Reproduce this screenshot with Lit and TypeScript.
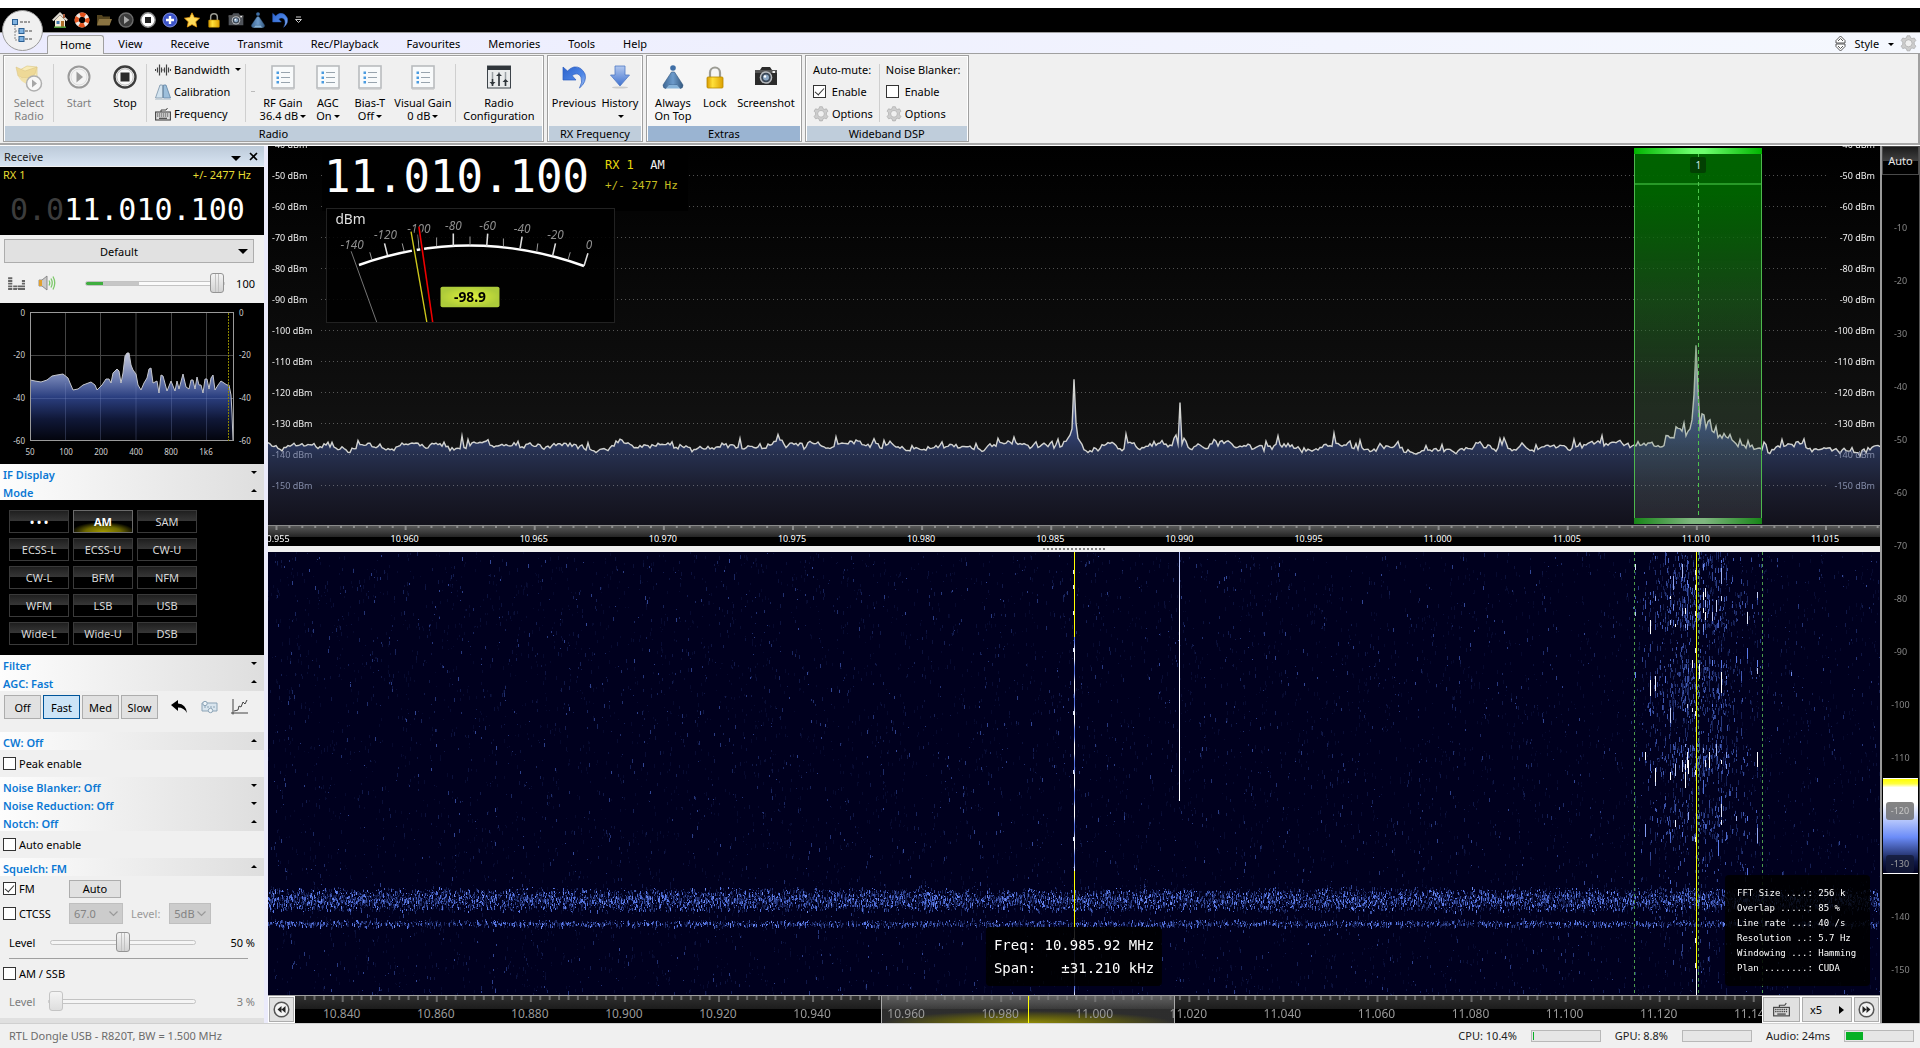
import { LitElement, html, css, svg, nothing } from "lit";
import { customElement, query } from "lit/decorators.js";

/* ---------- receiver data (kHz / dBm) ---------- */
const CENTRE = 10985.92;
const HALF_SPAN = 31.21;
const VFO = 11010.1;
const HALF_BW = 2.477;
const START = CENTRE - HALF_SPAN;
const SPAN = HALF_SPAN * 2;
const pct = (f: number) => ((f - START) / SPAN) * 100;
const DB_TOP = -40.7;
const DB_RANGE = 122.3;
const dbPct = (db: number) => ((DB_TOP - db) / DB_RANGE) * 100;

const BAND_START = 10830.07;
const BAND_SPAN = 311.9;
const bandPct = (f: number) => ((f - BAND_START) / BAND_SPAN) * 100;

const fmt = (k: number) => (k / 1000).toFixed(3);

function rng(seed: number) {
  let a = seed;
  return () => {
    a = (a + 0x6d2b79f5) | 0;
    let t = Math.imul(a ^ (a >>> 15), 1 | a);
    t = (t + Math.imul(t ^ (t >>> 7), 61 | t)) ^ t;
    return ((t ^ (t >>> 14)) >>> 0) / 4294967296;
  };
}

/* ---------- icons ---------- */
const play = (c: string, s: number) => svg`<svg width=${s} height=${s} viewBox="0 0 24 24"><circle cx="12" cy="12" r="10.5" fill="#f4f4f4" stroke=${c} stroke-width="2"/><circle cx="12" cy="12" r="8" fill="none" stroke="#ddd"/><path d="M9.5 6.5 L16 12 L9.5 17.5Z" fill=${c}/></svg>`;
const stop = (c: string, s: number) => svg`<svg width=${s} height=${s} viewBox="0 0 24 24"><circle cx="12" cy="12" r="10.5" fill="#fafafa" stroke=${c} stroke-width="2.4"/><circle cx="12" cy="12" r="8.2" fill="none" stroke="#bbb"/><rect x="7.5" y="7.5" width="9" height="9" fill="#2c2c2c"/></svg>`;
const listIcon = svg`<svg width="24" height="25" viewBox="0 0 24 25"><rect x="1" y="1" width="22" height="22" fill="#f8fafb" stroke="#b9bcbf" stroke-width="1.6"/><path d="M1 24.3H23" stroke="#d0d0d0"/><g fill="#4a9be0"><rect x="5.500" y="6.500" width="2.500" height="2.500"/><rect x="5.500" y="11.500" width="2.500" height="2.500"/><rect x="5.500" y="16" width="2.500" height="2.500"/></g><path d="M10 7.5H19M10 12.5H19M10 17.5H19" stroke="#98a4ae"/></svg>`;
const lock = (s: number) => svg`<svg width=${s} height=${s} viewBox="0 0 24 24"><path d="M7 13V7.5a5 5 0 0 1 10 0V13" fill="none" stroke="#9c9c94" stroke-width="2.2"/><rect x="4" y="12" width="16" height="11" rx="1" fill="url(#gold)" stroke="#b98a00" stroke-width=".8"/><defs><linearGradient id="gold"><stop offset="0" stop-color="#d99a00"/><stop offset=".35" stop-color="#ffe03a"/><stop offset="1" stop-color="#dda000"/></linearGradient></defs></svg>`;
const cone = (s: number) => svg`<svg width=${s} height=${s} viewBox="0 0 24 24"><circle cx="12" cy="3" r="2.8" fill="#3f6fa6"/><path d="M10.5 7h3L22 20q0 3.5-3 3.500L16 20H8l-3 3.500q-3 0-3-3.500Z" fill="url(#cn)" stroke="#34587f" stroke-width=".6"/><path d="M5 23.500L8 20h8l3 3.500Z" fill="#86b3da"/><defs><linearGradient id="cn"><stop offset="0" stop-color="#3d6794"/><stop offset=".5" stop-color="#6d9bcb"/><stop offset="1" stop-color="#34587f"/></linearGradient></defs></svg>`;
const undo = (s: number) => svg`<svg width=${s} height=${s} viewBox="0 0 24 24"><path d="M1 2V15H14L10 10.500Q16 6.500 19 12Q21 17 17.500 23Q25 17 23 9Q19 1 12 2Q8.500 2.800 5.500 6Z" fill="url(#un)" stroke="#2a5cc0" stroke-width=".7"/><defs><linearGradient id="un" x2="1" y2="1"><stop offset="0" stop-color="#2d63cc"/><stop offset=".6" stop-color="#4d86e6"/><stop offset="1" stop-color="#a9c6f6"/></linearGradient></defs></svg>`;
const camera = (s: number, c = "#2b2b2b") => svg`<svg width=${s} height=${s} viewBox="0 0 24 24"><path d="M1 5H6L8 2H16L18 5H23V20H1Z" fill=${c}/><rect x="1" y="5" width="22" height="3" fill="#555"/><circle cx="12" cy="12.500" r="6.300" fill="#b9bcc0"/><circle cx="12" cy="12.500" r="4.800" fill="#3a4654"/><circle cx="12" cy="12.500" r="3" fill="#8ba6c2"/><circle cx="11" cy="11.500" r="1.200" fill="#fff"/><rect x="18.500" y="6" width="2.500" height="2" fill="#eee"/></svg>`;
const gear = (s: number) => svg`<svg width=${s} height=${s} viewBox="0 0 24 24"><g fill="#cdcdcd" stroke="#9c9c9c" stroke-width=".8"><path d="M10 1h4l1 3 2 1 3.200-.8 2.200 3.500-2.200 2.500v3l2.200 2.500-2.200 3.500-3.200-.8-2 1-1 3h-4l-1-3-2-1-3.200.8L1.600 15.700l2.200-2.500v-3L1.600 7.700 3.800 4.200 7 5l2-1Z"/><circle cx="12" cy="11.700" r="5" fill="#f0f0f0"/></g></svg>`;
const bandwidthIcon = svg`<svg width="16" height="14" viewBox="0 0 16 14"><path d="M.5 6v2M2.500 4.500v5M4.500 1.500v11M6.500 4.500v5M8 6.500v1M9.500 4.500v5M11.500 1.500v11M13.500 4.500v5M15.500 6v2" stroke="#444" stroke-width="1.200"/></svg>`;
const calibIcon = svg`<svg width="16" height="16" viewBox="0 0 16 16"><path d="M5 1H7.500V14H.5Z" fill="#d2e3ef" stroke="#7892a8" stroke-width=".8"/><path d="M8.500 1H11L15.500 14H8.500Z" fill="#9dbfdb" stroke="#5f84a4" stroke-width=".8"/><path d="M0 15.500H16" stroke="#c9d3da"/></svg>`;
const keyboard = (w: number, c = "#444") => svg`<svg width=${w} height=${w - 2} viewBox="0 0 16 14"><path d="M6 5V3H11L12.500 1" fill="none" stroke=${c}/><rect x=".6" y="5" width="14.800" height="8" fill="#ddd" stroke=${c} stroke-width="1.100"/><path d="M2 7H14M2 9H14" stroke=${c} stroke-width="1.200" stroke-dasharray="1.300 .7"/><path d="M4 11.300H12" stroke=${c} stroke-width="1.200"/></svg>`;
const mixer = svg`<svg width="24" height="24" viewBox="0 0 24 24"><rect x=".5" y="1" width="23" height="22" fill="#e9ebec" stroke="#3d444a"/><rect x=".5" y="1" width="23" height="4" fill="#30363b"/><path d="M5.500 7V21M12 7V21M18.500 7V21" stroke="#9aa0a5" stroke-width="1.500"/><path d="M5.500 14V21M12 10V21M18.500 15V21" stroke="#30363b" stroke-width="1.500"/><path d="M2.500 17L5.500 20L8.500 17ZM9 11L12 8L15 11ZM15.500 17L18.500 14L21.500 17Z" fill="#30363b"/></svg>`;
const folderPlay = svg`<svg width="28" height="27" viewBox="0 0 28 27" opacity=".75"><path d="M3 6L12 1L22 2V13L9 16Z" fill="#fbeaa4" stroke="#d9bf68" stroke-width=".7"/><path d="M1 2L3 11Q12 16 20 9L22 2L10 6Z" fill="#eed27a" stroke="#d0b05a" stroke-width=".5"/><path d="M3 11Q9 15 14 13L12 19Q5 16 3 11Z" fill="#f2dc92"/><circle cx="19" cy="18.500" r="7.500" fill="#fafafa" stroke="#9a9a9a" stroke-width="1.500"/><path d="M17 14.500L22 18.500L17 22.500Z" fill="#8e8e8e"/></svg>`;
const downArrow = svg`<svg width="24" height="24" viewBox="0 0 24 24"><path d="M7 1H17V10H21.500L12 21L2.500 10H7Z" fill="url(#da)" stroke="#4f79c4" stroke-width=".8"/><ellipse cx="12" cy="22.500" rx="8" ry="1" fill="#ccc"/><defs><linearGradient id="da" x2="0" y2="1"><stop offset="0" stop-color="#b3c8ee"/><stop offset="1" stop-color="#3f72d0"/></linearGradient></defs></svg>`;

const q = (label: string, icon: unknown) => html`<button class="qa" aria-label=${label}>${icon}</button>`;
const quick = [
  q("Home", svg`<svg width="16" height="16" viewBox="0 0 16 16"><path d="M3 8V15H13V8L8 3Z" fill="#f3ead6"/><path d="M.8 8.500L8 1.500L15.200 8.500" fill="none" stroke="#ddd9d0" stroke-width="2"/><rect x="11" y="2" width="2" height="4" fill="#a65a3a"/><rect x="4.500" y="9" width="3" height="3" fill="#3e78b0"/><rect x="9" y="9" width="3" height="6" fill="#b0702a"/><path d="M2 15.200H14" stroke="#4e9a3a" stroke-width="1.500"/></svg>`),
  q("Support", svg`<svg width="16" height="16" viewBox="0 0 16 16"><circle cx="8" cy="8" r="5.300" fill="none" stroke="#f2e9e2" stroke-width="4.200"/><circle cx="8" cy="8" r="5.300" fill="none" stroke="#e2521c" stroke-width="4.200" stroke-dasharray="5.300 3.025" stroke-dashoffset="2.650"/></svg>`),
  q("Open", svg`<svg width="16" height="16" viewBox="0 0 16 16"><path d="M1 3H6L7 4.500H14V13H1Z" fill="#54441f"/><path d="M3 7H16L13.500 13.500H1Z" fill="#8a7342"/></svg>`),
  q("Start", svg`<svg width="16" height="16" viewBox="0 0 16 16"><circle cx="8" cy="8" r="7" fill="#3c3c3c" stroke="#6c6c6c" stroke-width="1.400"/><path d="M6 4L11.500 8L6 12Z" fill="#aaa"/></svg>`),
  q("Stop", svg`<svg width="16" height="16" viewBox="0 0 16 16"><circle cx="8" cy="8" r="7.200" fill="#fff" stroke="#8a8a8a" stroke-width="1.400"/><rect x="5" y="5" width="6" height="6" fill="#222"/></svg>`),
  q("Add", svg`<svg width="16" height="16" viewBox="0 0 16 16"><circle cx="8" cy="8" r="7" fill="#3b53c9" stroke="#8292e0"/><path d="M8 4V12M4 8H12" stroke="#fff" stroke-width="2.400"/></svg>`),
  q("Favourite", svg`<svg width="16" height="16" viewBox="0 0 16 16"><path d="M8 .8L10.300 5.500L15.500 6.200L11.700 9.800L12.700 15L8 12.500L3.300 15L4.300 9.800L.5 6.200L5.700 5.500Z" fill="#ffdc5a" stroke="#e89a10" stroke-width=".8"/></svg>`),
  q("Lock", lock(16)),
  q("Screenshot", camera(16, "#50545a")),
  q("On top", cone(16)),
  q("Previous", undo(16)),
];

const big = (icon: unknown, a: string, b: unknown, w: string, off = false) =>
  html`<button class="big ${w}" ?disabled=${off}><span class="ico">${icon}</span><span>${a}</span><span>${b}</span></button>`;
const caret = html`<i class="caret"></i>`;

const section = (t: string, open: boolean) =>
  html`<button class="section" aria-expanded=${open}>${t}<i class="tri ${open ? "up" : ""}"></i></button>`;

const MODES = ["• • •", "AM", "SAM", "ECSS-L", "ECSS-U", "CW-U", "CW-L", "BFM", "NFM", "WFM", "LSB", "USB", "Wide-L", "Wide-U", "DSB"];

/* audio spectrum trace, in panel units */
const AUDIO: number[][] = [
  [30.5, 77], [35, 78], [41, 79], [47, 77], [52, 73], [57, 72], [63, 71], [68, 75], [70, 80], [73, 87], [78, 86], [83, 82], [91, 79], [95, 82], [97, 87], [102, 82], [106, 76], [109, 76], [111, 80], [113, 70], [117, 66], [119, 68], [121, 80], [123, 70], [125, 53], [127, 50], [129, 50], [131, 62], [133, 67], [136, 71], [138, 82], [141, 87], [144, 80], [147, 75], [149, 66], [151, 65], [153, 80], [157, 78], [159, 90], [161, 72], [163, 73], [167, 88], [171, 78], [175, 88], [177, 78], [179, 86], [183, 71], [186, 84], [189, 86], [191, 77], [193, 77], [195, 86], [197, 74], [199, 82], [201, 82], [203, 90], [205, 76], [207, 76], [209, 86], [211, 75], [213, 72], [215, 87], [218, 82], [221, 78], [224, 80], [227, 82], [229, 82], [231, 92], [232, 110], [233, 138],
];
const audioLine = AUDIO.map((p) => p.join(",")).join(" ");

const INFO = ["FFT Size ....: 256 k", "Overlap .....: 85 %", "Line rate ...: 40 /s", "Resolution ..: 5.7 Hz", "Windowing ...: Hamming", "Plan ........: CUDA"];

const range = (a: number, b: number, s: number) => {
  const r: number[] = [];
  for (let i = 0; a + i * s <= b; i++) r.push(a + i * s);
  return r;
};

/* ---------- spectrum plot ---------- */
@customElement("spectrum-plot")
export class SpectrumPlot extends LitElement {
  static styles = css`
    :host { display: block; overflow: hidden; }
    canvas { display: block; }
  `;
  @query("canvas") canvas!: HTMLCanvasElement;
  firstUpdated() {
    new ResizeObserver(() => this.draw()).observe(this);
    this.draw();
  }
  draw() {
    const w = this.clientWidth, h = this.clientHeight;
    if (!w || !h) return;
    const c = this.canvas;
    c.width = w; c.height = h;
    const g = c.getContext("2d")!;
    const bg = g.createLinearGradient(0, 0, 0, h);
    bg.addColorStop(0, "#000"); bg.addColorStop(1, "#171717");
    g.fillStyle = bg; g.fillRect(0, 0, w, h);
    const yOf = (db: number) => (dbPct(db) / 100) * h;

    const rnd = rng(77);
    const noise: number[] = [];
    let wander = 0;
    let spike = 0;
    for (let x = 0; x <= w; x += 2) {
      wander = wander * 0.84 + (rnd() - 0.5) * 1.5;
      spike = rnd() < 0.12 ? 0.6 + rnd() * rnd() * 3.6 : spike * 0.1;
      let db = -137.7 + wander + spike + (rnd() - 0.5) * 1.1;
      const f = START + (x / w) * SPAN;
      const side = Math.abs(f - 11010.1);
      if (side < 1.3) db = Math.max(db, -137 + (1.3 - side) * 2.6 + rnd() * 6.4 * (1.2 - side * 0.5));
      noise.push(db);
    }
    const at = (f: number) => ((f - START) / SPAN) * w;
    for (const [f, top, wide] of [[10985.92, -116, 4], [10990, -123.5, 3], [11010, -105, 3]]) {
      const cx = Math.round(at(f) / 2);
      noise[cx] = top;
      noise[cx - 1] = Math.max(noise[cx - 1], top - 16);
      noise[cx + 1] = Math.max(noise[cx + 1], top - 14);
      for (let i = 2; i <= wide; i++) {
        noise[cx - i] = Math.max(noise[cx - i], -132 - i);
        noise[cx + i] = Math.max(noise[cx + i], -133 - i);
      }
    }
    g.beginPath();
    g.moveTo(0, h);
    noise.forEach((d, i) => g.lineTo(i * 2, yOf(d)));
    g.lineTo(w, h);
    g.closePath();
    const fill = g.createLinearGradient(0, yOf(-105), 0, h);
    fill.addColorStop(0, "#c8cbe0"); fill.addColorStop(0.3, "#66749f"); fill.addColorStop(0.45, "#35457a");
    fill.addColorStop(0.6, "#26304f"); fill.addColorStop(0.8, "#1a1c2c"); fill.addColorStop(1, "#12111b");
    g.fillStyle = fill; g.fill();
    g.strokeStyle = "#d2d3d0"; g.lineWidth = 1.4;
    g.beginPath();
    noise.forEach((d, i) => (i ? g.lineTo(i * 2, yOf(d)) : g.moveTo(0, yOf(d))));
    g.stroke();
    g.fillStyle = "rgba(190,190,190,.42)";
    for (let db = -50; db >= -150; db -= 10) {
      const y = Math.round(yOf(db));
      for (let x = 53; x < w - 52; x += 4) g.fillRect(x, y, 1, 1);
    }
  }
  render() { return html`<canvas></canvas>`; }
}

/* ---------- waterfall plot ---------- */
@customElement("waterfall-plot")
export class WaterfallPlot extends LitElement {
  static styles = css`
    :host { display: block; overflow: hidden; background: #00001e; }
    canvas { display: block; }
  `;
  @query("canvas") canvas!: HTMLCanvasElement;
  firstUpdated() {
    new ResizeObserver(() => this.draw()).observe(this);
    this.draw();
  }
  colour(v: number): [number, number, number] {
    const stops: [number, number, number, number][] = [[0, 0, 0, 30], [0.25, 24, 36, 92], [0.6, 90, 122, 235], [0.85, 255, 255, 255], [0.97, 255, 255, 255], [1, 255, 255, 0]];
    v = Math.max(0, Math.min(1, v));
    for (let i = 1; i < stops.length; i++) {
      const a = stops[i - 1], b = stops[i];
      if (v <= b[0]) {
        const t = (v - a[0]) / (b[0] - a[0]);
        return [a[1] + (b[1] - a[1]) * t, a[2] + (b[2] - a[2]) * t, a[3] + (b[3] - a[3]) * t];
      }
    }
    return [255, 255, 0];
  }
  draw() {
    const w = this.clientWidth, h = this.clientHeight;
    if (!w || !h) return;
    const c = this.canvas;
    c.width = w; c.height = h;
    const g = c.getContext("2d")!;
    const v = new Float32Array(w * h);
    const rnd = rng(4242);
    const put = (x: number, y: number, len: number, a: number) => {
      x = Math.round(x); y = Math.round(y);
      if (x < 0 || x >= w) return;
      for (let i = 0; i < len; i++) {
        const yy = y + i;
        if (yy < 0 || yy >= h) continue;
        const k = yy * w + x;
        if (a > v[k]) v[k] = a;
      }
    };
    const n = (w * h) / 75;
    for (let i = 0; i < n; i++) {
      const r = rnd();
      put(rnd() * w, rnd() * h, 1 + Math.floor(rnd() * 4), 0.06 + r * r * r * r * 0.34);
    }
    /* broadband bursts */
    const bands: [number, number, number][] = [[0.755, 0.812, 0.46], [0.829, 0.846, 0.42]];
    for (const [a, b, dens] of bands) {
      const y0 = a * h, y1 = b * h;
      const count = w * (y1 - y0) * dens * 0.62;
      for (let i = 0; i < count; i++) {
        const t = (rnd() + rnd()) / 2;
        const r = rnd();
        put(rnd() * w, y0 + t * (y1 - y0), 1 + Math.floor(rnd() * 3), 0.14 + r * r * 0.5);
      }
    }
    /* modulation sidebands */
    const at = (f: number) => ((f - START) / SPAN) * w;
    const carrier = at(11010);
    const env = (t: number) => {
      if (t < 0.02) return 0.55;
      if (t < 0.09) return 0.75;
      if (t < 0.17) return 0.9;
      if (t < 0.24) return 0.28;
      if (t < 0.36) return 0.85;
      if (t < 0.43) return 0.35;
      if (t < 0.5) return 0.9;
      if (t < 0.56) return 0.3;
      if (t < 0.65) return 0.6;
      if (t < 0.72) return 0.16;
      return 0.08;
    };
    const cols: [number, number][] = [[-61, .3], [-51, .25], [-46, .5], [-41, .4], [-31, .3], [-26, .6], [-23, .6], [-21, .4], [-14, .55], [-11, .6], [-9, .85], [-8, .7], [-4, .7], [3, .6], [7, .9], [9, .8], [13, .55], [16, .5], [20, .6], [22, .4], [25, .7], [30, .4], [40, .3], [45, .45], [51, .25], [61, .35], [95, .04]];
    for (const [dx, s] of cols) {
      for (let y = 0; y < h; y += 4) {
        const e = env(y / h);
        const m = rnd();
        if (m < e * s * 0.6) {
          const boost = rnd();
          put(carrier + dx, y, 3 + Math.floor(rnd() * (boost > 0.85 ? 14 : 6)), Math.min(0.93, (0.26 + boost * boost * boost * 0.75) * (0.55 + e * 0.5)));
        }
      }
    }
    for (let i = 0; i < 3000; i++) {
      const y = rnd() * h * 0.97;
      if (rnd() > env(y / h)) continue;
      const d = (rnd() + rnd() + rnd() - 1.5) * 50;
      put(carrier + d, y, 2 + Math.floor(rnd() * 4), 0.12 + rnd() * 0.35);
    }
    /* steady carriers */
    const a = Math.round(at(10985.92)), b = Math.round(at(10990));
    for (let y = 0; y < h; y++) {
      if (y < h * 0.56) put(b, y, 1, 0.72 + Math.min(0.18, (y / h) * 0.9));
      put(a, y, 1, 0.74 + 0.18 * Math.sin(y / 5));
      if (y < h * 0.19 || (y > h * 0.72 && y < h * 0.85)) put(a, y, 1, 1);
      put(Math.round(carrier), y, 1, y < h * 0.94 ? 1 : 0.9);
      if (rnd() < 0.02) { put(a - 1, y, 4, 0.8); put(carrier - 1, y, 5, 0.8); }
    }
    const img = g.createImageData(w, h);
    for (let i = 0; i < v.length; i++) {
      const [r, gr, bl] = this.colour(v[i]);
      img.data[i * 4] = r; img.data[i * 4 + 1] = gr; img.data[i * 4 + 2] = bl; img.data[i * 4 + 3] = 255;
    }
    g.putImageData(img, 0, 0);
  }
  render() { return html`<canvas></canvas>`; }
}

/* ---------- application ---------- */
@customElement("app-root")
export class AppRoot extends LitElement {
  static styles = css`
    :host { display: flex; flex-direction: column; height: 100vh; overflow: hidden; background: #f0f0f0; font: 11px/13px "Noto Sans", "Open Sans", sans-serif; color: #000; }
    * { box-sizing: border-box; }
    button, select, input { font: inherit; color: inherit; margin: 0; }
    button { padding: 0; border: 0; background: none; }
    svg { display: block; flex: none; }
    .caret { display: inline-block; border: 3px solid transparent; border-top: 3px solid #000; border-bottom: 0; margin-left: 2px; vertical-align: 2px; }

    .title { flex: none; height: 33px; border-top: 8px solid #fff; border-bottom: 1px solid #a0a0a0; background: #000; display: flex; align-items: center; gap: 6px; padding-left: 52px; position: relative; }
    .qa { width: 16px; height: 16px; }
    .orb { position: absolute; left: 2px; top: 2px; width: 41px; height: 41px; border-radius: 50%; background: #f0f0f0; border: 1px solid #9a9a9a; display: grid; place-items: center; z-index: 2; }
    .more { color: #ddd; width: 8px; height: 16px; display: grid; place-items: center; }

    .tabs { flex: none; height: 21px; display: flex; align-items: center; padding: 0 3px 0 47px; background: linear-gradient(90deg, #ebebfe, #f5f8fe); border-bottom: 1px solid #a0a0a0; }
    .tab { height: 18px; padding: 0 13px; margin-top: 1px; border: 1px solid transparent; border-bottom: 0; line-height: 16px; }
    .tab.on { height: 19px; margin-bottom: -1px; background: #f0f0f0; border-color: #a0a0a0; border-radius: 3px 3px 0 0; padding: 0 12px; }
    .right { margin-left: auto; display: flex; align-items: center; gap: 6px; }
    .right .caret { margin-left: 6px; }
    .right svg { margin-right: 2px; }
    .right button svg { margin: 0; }

    .ribbon { flex: none; display: flex; align-items: flex-start; gap: 3px; padding: 1px 3px; height: 91px; border-bottom: 2px solid #a8a8a8; border-right: 2px solid #a0a0a0; background: #f0f0f0; }
    .group { height: 87px; border: 1px solid #a0a0a0; box-shadow: inset 0 0 0 1px #fff; display: flex; flex-direction: column; padding: 1px 1px 0; }
    .group.lit { background: #f6f6f6; }
    .body { flex: 1; display: flex; padding: 4px 0 4px; }
    .cap { height: 15px; background: #bfcddb; text-align: center; line-height: 15px; }
    .lit .cap { background: #9ab4d2; }
    .sep { width: 1px; background: #cfcfcf; margin-top: 3px; }
    .big { display: flex; flex-direction: column; align-items: center; white-space: nowrap; line-height: 13px; }
    .big:disabled { color: #808080; }
    .big .ico { height: 35px; display: flex; align-items: flex-start; padding-top: 4px; }
    .w34 { width: 34px; } .w42 { width: 42px; } .w48 { width: 48px; } .w50 { width: 50px; } .w64 { width: 64px; } .w68 { width: 68px; } .w86 { width: 86px; }
    .small { display: flex; flex-direction: column; justify-content: space-between; padding: 0 4px 0 8px; }
    .line { display: flex; align-items: center; gap: 3px; height: 17px; white-space: nowrap; }
    .dash { align-self: center; width: 4px; height: 1px; background: #bbb; margin: 0 4px 0 5px; }
    .dsp { padding: 0 6px; display: flex; flex-direction: column; justify-content: space-between; }

    input[type="checkbox"] { appearance: none; width: 13px; height: 13px; border: 1px solid #333; background: #fff; flex: none; display: grid; place-items: center; }
    input[type="checkbox"]:checked::after { content: ""; width: 8px; height: 4px; border-left: 1px solid #333; border-bottom: 1px solid #333; transform: rotate(-48deg); margin-top: -3px; }

    .work { flex: 1; min-height: 0; display: flex; background: #ebebfb; border-top: 1px solid #fff; }
    .side { width: 264px; flex: none; background: #f0f0f0; overflow: hidden; display: flex; flex-direction: column; border-bottom: 5px solid #e0e0e0; }
    .side > * { flex: none; }
    .sidehead { height: 20px; background: linear-gradient(#bccad9, #d8e4f2); display: flex; align-items: center; padding: 0 6px 0 4px; color: #222; gap: 8px; }
    .sidehead .grow { flex: 1; }
    .drop { border: 5px solid transparent; border-top-color: #000; border-bottom: 0; display: inline-block; }
    .vfo { background: #000; height: 68px; margin-top: 1px; }
    .vfo .row { display: flex; justify-content: space-between; color: #e6dc32; padding: 1px 13px 0 3px; }
    .digits { font: 30px/36px "DejaVu Sans Mono", monospace; color: #fff; padding: 11px 0 0 10px; white-space: pre; }
    .digits .dim { color: #3c3c3c; }
    .profile { position: relative; margin: 4px 10px 0 4px; height: 24px; }
    select { appearance: none; border: 1px solid #adadad; background: #e1e1e1; border-radius: 0; }
    .profile select { width: 100%; height: 24px; text-align: center; text-align-last: center; padding-right: 20px; }
    .profile .drop { position: absolute; right: 6px; top: 10px; pointer-events: none; }
    .audio { height: 40px; display: flex; align-items: center; padding: 0 9px 0 8px; }
    .audio .vol { margin-left: 29px; width: 140px; }
    .audio output { margin-left: auto; }
    .spk { margin-left: 13px; }

    input[type="range"] { appearance: none; background: none; height: 20px; padding: 0; }
    input[type="range"]::-webkit-slider-runnable-track { height: 5px; border: 1px solid #c3c3c3; border-radius: 3px; background: #f5f5f5; }
    input[type="range"]::-webkit-slider-thumb { appearance: none; width: 14px; height: 20px; margin-top: -9px; border: 1px solid #949494; border-radius: 3px; background: linear-gradient(90deg, transparent 4px, #c2c2c2 4px, #c2c2c2 5px, transparent 5px, transparent 7px, #c2c2c2 7px, #c2c2c2 8px, transparent 8px), linear-gradient(#f4f4f4, #d2d2d2); }
    .vol::-webkit-slider-runnable-track { background: linear-gradient(90deg, #3fae3f 17px, #c6c6c6 17px, #c6c6c6 53px, #fafafa 53px) !important; }
    input[type="range"]:disabled::-webkit-slider-thumb { border-color: #c4c4c4; background: linear-gradient(#f4f4f4, #dedede); }

    .scope { background: #000; height: 161px; }
    .scope text { font: 8px "Noto Sans", sans-serif; fill: #d0d0d0; }
    .section { display: flex; width: 100%; height: 18px; align-items: center; justify-content: space-between; padding: 3px 7px 0 3px; background: linear-gradient(90deg, #fdfdfd, #dedede); color: #0b78d4; font-weight: 600; }
    .tri { border: 3px solid transparent; border-top-color: #000; border-bottom: 0; margin-top: -5px; }
    .tri.up { border: 3px solid transparent; border-bottom-color: #000; border-top: 0; }
    .modes { background: #000; display: grid; grid-template-columns: repeat(3, 60px); grid-auto-rows: 23px; gap: 5px 4px; padding: 10px 9px; }
    .mode { border: 1px solid #3a3a3a; color: #d8d8d8; background: linear-gradient(#1f1f1f, #383838 50%, #000 50%); line-height: 19px; }
    .mode.dots { color: #fff; font-weight: 700; }
    .mode.on { border-color: #6a6a6a; color: #fff; font-weight: 700; background: radial-gradient(ellipse 32px 10px at 50% 100%, #a39a00, #6d6800 55%, transparent), linear-gradient(#1f1f1f, #383838 50%, #000 50%); }
    .agc { display: flex; align-items: center; gap: 2px; padding: 4px 4px 13px; }
    .push { border: 1px solid #adadad; background: #e1e1e1; height: 24px; width: 37px; }
    .push.on { background: #cce4f7; border-color: #005499; }
    .agc svg { margin-left: 11px; }
    .check { display: flex; align-items: center; gap: 3px; padding: 0 3px; height: 27px; }
    .sq { display: flex; align-items: center; height: 25px; padding: 0 3px; }
    .sq label { display: flex; align-items: center; gap: 3px; }
    .sq .first { width: 66px; }
    .sq .push { width: 52px; height: 18px; }
    .sel { position: relative; color: #838383; }
    .sel select { height: 21px; background: #ccc; border-color: #bfbfbf; padding: 0 4px; width: 54px; opacity: 1; }
    .sel.n select { width: 42px; }
    .sel svg { position: absolute; right: 5px; top: 8px; pointer-events: none; }
    .mut { color: #9a9a9a; padding: 0 9px 0 8px; }
    .lvl { display: flex; align-items: center; height: 32px; padding: 0 9px; }
    .lvl label { width: 41px; }
    .lvl input { width: 146px; }
    .lvl output { margin-left: auto; }
    .lvl.off { color: #7c7c7c; height: 31px; }
    .lvl.off label { width: 39px; }
    .lvl.off input { width: 148px; }
    .rule { height: 1px; background: #a0a0a0; margin: 0 16px 2px 9px; }

    .main { flex: 1; min-width: 0; margin-left: 4px; display: flex; flex-direction: column; border-right: 0; }
    .spec { flex: 379 1 0; position: relative; overflow: hidden; min-height: 0; }
    .spec spectrum-plot, .fall waterfall-plot { position: absolute; inset: 0; }
    .db { position: absolute; font-size: 9px; line-height: 12px; transform: translateY(-50%); color: #f0f0f0; white-space: nowrap; margin-top: 1px; }
    .db.l { left: 4px; } .db.r { right: 5px; }
    .db.deep { color: #858daa; }
    .vfobox { position: absolute; left: 54px; top: 0; width: 366px; height: 65px; background: #000; color: #fff; display: flex; gap: 16px; padding: 5px 2px; font-family: "DejaVu Sans Mono", monospace; }
    .bigfreq { font-size: 44px; line-height: 52px; }
    .rx { display: flex; flex-direction: column; padding-top: 6px; line-height: 16px; font-size: 12px; white-space: pre; color: #e8d80c; gap: 5px; }
    .rx b { font-weight: 400; color: #f0f0f0; margin-left: 2px; }
    .rx .bw { font-size: 11px; color: #c4bc20; }
    .gauge { position: absolute; left: 58px; top: 62px; border: 1px solid #222; background: rgba(0, 0, 0, 0.85); }
    .gauge text { font: italic 12px "Noto Sans", sans-serif; fill: #8e8e8e; text-anchor: middle; }
    .gauge text.u { font-style: normal; font-size: 14px; fill: #e0e0e0; text-anchor: start; }
    .gauge text.v { font: 700 14px "Noto Sans", sans-serif; fill: #000; }
    .pass { position: absolute; top: 2px; bottom: 1px; border: solid #4db84d; border-width: 0 1px; background: linear-gradient(rgba(0, 104, 0, 0.95), rgba(0, 104, 0, 0.93) 12%, rgba(30, 110, 30, 0.6) 40%, rgba(80, 130, 80, 0.26) 65%, rgba(128, 128, 128, 0.18)); }
    .pass::before, .pass::after { content: ""; position: absolute; left: -1px; right: -1px; height: 6px; }
    .pass::before { top: 0; background: linear-gradient(90deg, #00b400, #6dff6d 45%, #6dff6d 55%, #00b400); }
    .pass::after { bottom: 0; background: linear-gradient(90deg, #178517, #7fb67f 45%, #7fb67f 55%, #178517); }
    .sqline { position: absolute; left: 0; right: 0; top: 35px; height: 2px; background: #279a27; }
    .tag { position: absolute; left: 50%; top: 9px; width: 16px; height: 16px; margin-left: -8px; border-radius: 2px; background: #024002; color: #cfe8e8; text-align: center; font-size: 10px; line-height: 16px; }
    .vline { position: absolute; top: 6px; bottom: 6px; left: 50%; width: 1px; background: repeating-linear-gradient(#4dc34d 0 4px, transparent 4px 7px); }

    .axis { flex: none; height: 21px; position: relative; overflow: hidden; background: linear-gradient(#585858, #242424 11px, #000 11px); border-top: 1px solid #8a8a8a; }
    .axis svg, .nav svg.ticks { position: absolute; inset: 0; width: 100%; height: 100%; }
    .axis span { position: absolute; top: 7px; transform: translateX(-50%); color: #fff; font-size: 9px; line-height: 12px; }
    .split { flex: none; height: 6px; background: #f0f0f0; display: grid; place-items: center; }
    .split i { width: 63px; height: 2px; background: repeating-linear-gradient(90deg, #808080 0 2px, transparent 2px 4px); }
    .fall { flex: 443 1 0; position: relative; overflow: hidden; min-height: 0; }
    .edge { position: absolute; top: 0; bottom: 0; width: 1px; background: repeating-linear-gradient(#4d9c4d 0 3px, transparent 3px 6px); }
    .pop { position: absolute; background: rgba(0, 0, 0, 0.86); border-radius: 4px; color: #fff; font-family: "DejaVu Sans Mono", monospace; white-space: pre; margin: 0; }
    .freqpop { left: 50%; bottom: 9px; transform: translateX(-50%); padding: 7px 8px 6px; font-size: 14px; line-height: 23px; }
    .infopop { right: 10px; bottom: 9px; padding: 11px 12px 10px; font-size: 9px; line-height: 15px; width: 145px; }

    .nav { flex: none; height: 28px; display: flex; background: #fff; border-top: 1px solid #a0a0a0; }
    .strip { flex: 1; position: relative; overflow: hidden; background: linear-gradient(#303030, #1c1c1c 13px, #000 13px); }
    .strip span { position: absolute; top: 10px; transform: translateX(-50%); color: #9a9a9a; font-size: 12px; line-height: 16px; }
    .view { position: absolute; top: 0; bottom: 0; border: solid #a8a8a8; border-width: 0 1px; background: radial-gradient(ellipse 50% 12px at 50% 100%, rgba(160, 154, 0, 0.85), rgba(120, 116, 0, 0.55) 60%, transparent), linear-gradient(rgba(130, 130, 130, 0.6), rgba(90, 90, 90, 0.5) 13px, rgba(90, 90, 90, 0.5)); }
    .view i { position: absolute; left: 50%; top: 0; bottom: 0; width: 1px; background: #ff0; }
    .nbtn { border: 1px solid #adadad; background: #e1e1e1; margin: 1px; height: 25px; display: flex; align-items: center; justify-content: center; }
    .n24 { width: 25px; } .n37 { width: 37px; } .n50 { width: 50px; gap: 17px; }

    .scale { flex: none; width: 40px; border-left: 2px solid #9a9a9a; border-right: 1px solid #555; background: #000; display: flex; flex-direction: column; }
    .auto { height: 29px; border: 1px solid #4a4a4a; color: #e6e6e6; background: linear-gradient(#1c1c1c, #404040 14px, #000 14px); }
    .levels { position: relative; flex: 1; color: #868686; font-size: 9px; line-height: 12px; }
    .levels span { position: absolute; left: 0; right: 0; text-align: center; transform: translateY(-50%); }
    .grad { position: absolute; left: 1px; right: 1px; border-top: 1px solid #fff; border-bottom: 1px solid #fff; background: linear-gradient(#ff0, #ffff40 5%, #fff 9%, #fff 26%, #6b8cf8 62%, #101a48 88%, #00001e); }
    .levels span.chip { left: 4px; right: 5px; border-radius: 3px; line-height: 18px; background: rgba(110, 110, 110, 0.85); color: #c8c8c8; }
    .levels span.chip.dark { background: rgba(20, 26, 56, 0.8); color: #a0a0a0; }

    .status { flex: none; height: 25px; border-top: 1px solid #d0d0d0; display: flex; align-items: center; padding: 0 6px 0 9px; color: #6c6c6c; }
    .status .grow { flex: 1; }
    .status span, .status label { margin-top: -2px; }
    .status label { color: #222; margin-right: 14px; }
    .bar { width: 70px; height: 12px; border: 1px solid #b8b8b8; background: #e6e6e6; margin-right: 14px; padding: 1px; }
    .bar:last-child { margin-right: 0; }
    .bar i { display: block; height: 8px; background: #06b025; }
  `;

  ribbon() {
    return html`<div class="ribbon">
      <section class="group">
        <div class="body">
          ${big(folderPlay, "Select", "Radio", "w48", true)}<i class="sep"></i>
          ${big(play("#9a9a9a", 24), "Start", nothing, "w50", true)}${big(stop("#3c3c3c", 24), "Stop", nothing, "w42")}<i class="sep"></i>
          <div class="small">
            <button class="line">${bandwidthIcon}Bandwidth ${caret}</button>
            <button class="line">${calibIcon}Calibration</button>
            <button class="line">${keyboard(16)}Frequency</button>
          </div>
          <i class="sep"></i><i class="dash"></i>
          ${big(listIcon, "RF Gain", html`36.4 dB${caret}`, "w48")}
          ${big(listIcon, "AGC", html`On${caret}`, "w42")}
          ${big(listIcon, "Bias-T", html`Off${caret}`, "w42")}
          ${big(listIcon, "Visual Gain", html`0 dB${caret}`, "w64")}
          <i class="sep"></i>
          ${big(mixer, "Radio", "Configuration", "w86")}
        </div>
        <div class="cap">Radio</div>
      </section>
      <section class="group">
        <div class="body">${big(undo(24), "Previous", nothing, "w50")}${big(downArrow, "History", caret, "w42")}</div>
        <div class="cap">RX Frequency</div>
      </section>
      <section class="group lit">
        <div class="body">${big(cone(24), "Always", "On Top", "w50")}${big(lock(24), "Lock", nothing, "w34")}${big(camera(24), "Screenshot", nothing, "w68")}</div>
        <div class="cap">Extras</div>
      </section>
      <section class="group">
        <div class="body">
          <div class="dsp"><span class="line">Auto-mute:</span><label class="line"><input type="checkbox" checked />&nbsp;Enable</label><button class="line">${gear(16)}Options</button></div>
          <i class="sep"></i>
          <div class="dsp"><span class="line">Noise Blanker:</span><label class="line"><input type="checkbox" />&nbsp;Enable</label><button class="line">${gear(16)}Options</button></div>
        </div>
        <div class="cap">Wideband DSP</div>
      </section>
    </div>`;
  }

  side() {
    const chev = svg`<svg width="9" height="6" viewBox="0 0 9 6"><path d="M.5 .5L4.500 4.500L8.500 .5" fill="none" stroke="#999" stroke-width="1.200"/></svg>`;
    return html`<aside class="side">
      <div class="sidehead"><span class="grow">Receive</span><button aria-label="Menu"><i class="drop"></i></button><button aria-label="Close"><svg width="9" height="9" viewBox="0 0 9 9"><path d="M1 1L8 8M8 1L1 8" stroke="#000" stroke-width="1.600"/></svg></button></div>
      <div class="vfo"><div class="row"><span>RX 1</span><span>+/- 2477 Hz</span></div><div class="digits"><span class="dim">0.0</span>11.010.100</div></div>
      <div class="profile"><select aria-label="Profile"><option>Default</option></select><i class="drop"></i></div>
      <div class="audio">
        <svg width="17" height="13" viewBox="0 0 17 13"><g fill="none" stroke="#666" stroke-width="4.200" stroke-dasharray="1.900 .8"><path d="M2.200 13V0M7.300 13V7.500M12 13V7.500M16 13V3"/></g></svg>
        <svg class="spk" width="18" height="16" viewBox="0 0 18 16"><path d="M1 5H4L9 1V15L4 11H1Z" fill="#c9c9c9" stroke="#777" stroke-width=".8"/><path d="M1 5H4V11H1Z" fill="#e0a030"/><path d="M11 5.500Q12.500 8 11 10.500M13 3.500Q15.500 8 13 12.500M15 1.500Q18.500 8 15 14.500" fill="none" stroke="#7cc86a" stroke-width="1.300"/></svg>
        <input class="vol" type="range" aria-label="Volume" min="0" max="100" value="100" /><output>100</output>
      </div>
      <div class="scope"><svg width="264" height="161" viewBox="0 0 264 161">
        <defs><linearGradient id="af" x1="0" y1="50" x2="0" y2="138" gradientUnits="userSpaceOnUse"><stop offset="0" stop-color="#c6cadd"/><stop offset=".3" stop-color="#6a7aae"/><stop offset=".5" stop-color="#2b3f80"/><stop offset=".75" stop-color="#101838"/><stop offset="1" stop-color="#03040c"/></linearGradient></defs>
        <path d="M65.500 9V138M100.500 9V138M136 9V138M171.500 9V138M206.500 9V138M30 52.500H234M30 95.500H234" stroke="#444"/>
        <polygon points=${audioLine + " 30.5,138"} fill="url(#af)"/>
        <path d="M65.500 80V138M100.500 84V138M136 72V138M171.500 80V138M206.500 78V138M30 95.500H234" stroke="#8c9cd0" stroke-opacity=".25"/>
        <polyline points=${audioLine} fill="none" stroke="#c4c6cc"/>
        <rect x="30.500" y="9.500" width="203" height="128" fill="none" stroke="#9a9a9a"/>
        <path d="M228.500 10V138" stroke="#8a8400" stroke-dasharray="2 1"/>
        ${[["0", 13], ["-20", 55], ["-40", 98], ["-60", 141]].map(([t, y]) => svg`<text x="25" y=${y} text-anchor="end">${t}</text><text x="239" y=${y}>${t}</text>`)}
        ${[["50", 30], ["100", 66], ["200", 101], ["400", 136], ["800", 171], ["1k6", 206]].map(([t, x]) => svg`<text x=${x} y="152" text-anchor="middle">${t}</text>`)}
      </svg></div>
      ${section("IF Display", false)}${section("Mode", true)}
      <div class="modes">${MODES.map((m, i) => html`<button class="mode ${i === 1 ? "on" : ""} ${i === 0 ? "dots" : ""}">${m}</button>`)}</div>
      ${section("Filter", false)}${section("AGC: Fast", true)}
      <div class="agc">
        ${["Off", "Fast", "Med", "Slow"].map((t) => html`<button class="push ${t === "Fast" ? "on" : ""}">${t}</button>`)}
        <svg width="17" height="16" viewBox="0 0 17 16"><path d="M0 6L7 1V4.500Q15 5 16 14Q13 8.500 7 8.500V12Z" fill="#000"/></svg>
        <svg width="17" height="16" viewBox="0 0 17 16"><path d="M1 4H16V12H1Z" fill="#d9e5ee" stroke="#8ba3b6"/><path d="M3 8H14" stroke="#8ba3b6" stroke-dasharray="2 1"/><circle cx="4" cy="4.500" r="2.200" fill="#eef4f8" stroke="#8ba3b6"/><circle cx="9.500" cy="11.500" r="2.200" fill="#eef4f8" stroke="#8ba3b6"/></svg>
        <svg width="17" height="16" viewBox="0 0 17 16"><path d="M2 0V15.500M0 14H17" stroke="#444"/><path d="M3 12L7 11L8 7L10 8L12 3L14 5L16 1" fill="none" stroke="#444"/></svg>
      </div>
      ${section("CW: Off", true)}
      <label class="check"><input type="checkbox" />Peak enable</label>
      ${section("Noise Blanker: Off", false)}${section("Noise Reduction: Off", false)}${section("Notch: Off", true)}
      <label class="check"><input type="checkbox" />Auto enable</label>
      ${section("Squelch: FM", true)}
      <div class="sq"><label class="first"><input type="checkbox" checked />FM</label><button class="push">Auto</button></div>
      <div class="sq"><label class="first"><input type="checkbox" />CTCSS</label>
        <span class="sel"><select disabled aria-label="Tone"><option>67.0</option></select>${chev}</span>
        <label class="mut" for="tl">Level:</label>
        <span class="sel n"><select id="tl" disabled><option>5dB</option></select>${chev}</span></div>
      <div class="lvl"><label for="fm">Level</label><input id="fm" type="range" value="50" /><output>50 %</output></div>
      <div class="rule"></div>
      <div class="sq"><label><input type="checkbox" />AM / SSB</label></div>
      <div class="lvl off"><label for="am">Level</label><input id="am" type="range" value="0" disabled /><output>3 %</output></div>
    </aside>`;
  }

  gauge() {
    const labels: [string, number, number][] = [["-140", 24, 41], ["-120", 58, 31], ["-100", 92, 24], ["-80", 127, 21], ["-60", 162, 21], ["-40", 197, 24], ["-20", 231, 31], ["0", 265, 41]];
    return html`<svg class="gauge" width="289" height="115" viewBox="0 0 289 115">
      <defs><radialGradient id="lcd"><stop offset="0" stop-color="#e2f23a"/><stop offset="1" stop-color="#adcb3a"/></radialGradient></defs>
      <text class="u" x="7" y="15">dBm</text>
      ${labels.map(([t, x, y]) => svg`<text x=${x} y=${y}>${t}</text>`)}
      <path d="M31 57Q144 17 260 58" fill="none" stroke="#fff" stroke-width="2.500"/>
      <path d="M57 35L60 47M127 25L127 38M162 25L161 38M197 28L195 40M231 35L228 48M264 45L260 58" stroke="#ddd" stroke-width="1.600"/>
      <path d="M42 44L44 51M75 35L77 43M110 29L110 38M144 28V37M178 30L178 38M213 35L212 43M246 44L244 51M91 26L92 40" stroke="#999"/>
      <path d="M23 43L49 115" stroke="#777"/>
      <path d="M84 23L100 115" stroke="#000" stroke-width="5"/><path d="M92 18L106 115" stroke="#000" stroke-width="4"/>
      <path d="M84 23L100 115" stroke="#cfc91c" stroke-width="1.400"/>
      <path d="M92 18L106 115" stroke="#f00000" stroke-width="1.600"/>
      <rect x="114" y="79" width="60" height="21" rx="2" fill="url(#lcd)"/>
      <text class="v" x="144" y="95">-98.9</text>
    </svg>`;
  }

  main() {
    const lo = pct(VFO - HALF_BW), hi = pct(VFO + HALF_BW);
    return html`<main class="main">
      <div class="spec">
        <spectrum-plot></spectrum-plot>
        ${range(-150, -40, 10).map((d) => html`<span class="db l ${d < -135 ? "deep" : ""}" style="top:${dbPct(d)}%">${d} dBm</span><span class="db r ${d < -135 ? "deep" : ""}" style="top:${dbPct(d)}%">${d} dBm</span>`)}
        <div class="vfobox"><div class="bigfreq">11.010.100</div><div class="rx"><span>RX 1  <b>AM</b></span><span class="bw">+/- 2477 Hz</span></div></div>
        ${this.gauge()}
        <div class="pass" style="left:${lo}%;width:${hi - lo}%"><i class="sqline"></i><i class="vline"></i><span class="tag">1</span></div>
      </div>
      <div class="axis">
        <svg>${range(10955, 11017, 0.5).map((f) => svg`<rect x="${pct(f)}%" y="0" width="2" height=${f % 5 === 0 ? 4 : 2} fill="#8c8c8c"/>`)}</svg>
        ${range(10955, 11017, 5).map((f) => html`<span style="left:${pct(f)}%">${fmt(f)}</span>`)}
      </div>
      <div class="split"><i></i></div>
      <div class="fall">
        <waterfall-plot></waterfall-plot>
        <i class="edge" style="left:${lo}%"></i><i class="edge" style="left:${pct(VFO)}%"></i><i class="edge" style="left:${hi}%"></i>
        <pre class="pop freqpop">Freq: 10.985.92 MHz
Span:   ±31.210 kHz</pre>
        <pre class="pop infopop">${INFO.join("\n")}</pre>
      </div>
      <div class="nav">
        <button class="nbtn n24" aria-label="Scroll down"><svg width="17" height="17" viewBox="0 0 17 17"><circle cx="8.500" cy="8.500" r="7.300" fill="#f4f4f4" stroke="#555" stroke-width="1.500"/><path d="M8.500 5V12L4.500 8.500ZM12.500 5V12L8.500 8.500Z" fill="#222"/></svg></button>
        <div class="strip">
          <svg class="ticks">${range(10832, 11140, 2).map((f) => svg`<rect x="${bandPct(f)}%" y="0" width="2" height=${f % 20 === 0 ? 6 : 4} fill="#6c6c6c"/>`)}</svg>
          <div class="view" style="left:${bandPct(START)}%;width:${(SPAN / BAND_SPAN) * 100}%"><i></i></div>
          ${range(10840, 11140, 20).map((f) => html`<span style="left:${bandPct(f)}%">${fmt(f)}</span>`)}
        </div>
        <button class="nbtn n37" aria-label="Keyboard">${keyboard(17)}</button>
        <button class="nbtn n50">x5 <svg width="5" height="8" viewBox="0 0 5 8"><path d="M0 0L5 4L0 8Z"/></svg></button>
        <button class="nbtn n24" aria-label="Scroll up"><svg width="17" height="17" viewBox="0 0 17 17"><circle cx="8.500" cy="8.500" r="7.300" fill="#f4f4f4" stroke="#555" stroke-width="1.500"/><path d="M4.500 5V12L8.500 8.500ZM8.500 5V12L12.500 8.500Z" fill="#222"/></svg></button>
      </div>
    </main>`;
  }

  render() {
    const levelPct = (d: number) => ((-d * 5.3) / 848) * 100;
    return html`
      <header class="title">
        <button class="orb" aria-label="Application menu"><svg width="22" height="24" viewBox="0 0 22 24"><path d="M3 3V21H8M3 12H8" fill="none" stroke="#888" stroke-dasharray="2 1"/><path d="M8 3H18M13 12H20M13 20H20" stroke="#444" stroke-dasharray="3 1"/><g fill="#7fb2e0" stroke="#2b5f92"><rect x=".5" y=".5" width="5" height="5"/><rect x="7" y="9.500" width="5" height="5"/><rect x="7" y="17.500" width="5" height="5"/></g></svg></button>
        ${quick}
        <button class="more" aria-label="Customise"><svg width="7" height="8" viewBox="0 0 7 8"><path d="M1 1H6M.5 3.500H6.500L3.500 6.500Z" fill="none" stroke="#ccc"/></svg></button>
      </header>
      <nav class="tabs">
        ${["Home", "View", "Receive", "Transmit", "Rec/Playback", "Favourites", "Memories", "Tools", "Help"].map((t, i) => html`<button class="tab ${i ? "" : "on"}">${t}</button>`)}
        <div class="right">
          <svg width="11" height="17" viewBox="0 0 11 17"><path d="M1 8V5.500L5.500 1L10 5.500V8ZM1 9V11.500L5.500 16L10 11.500V9Z" fill="#fff" stroke="#555"/><path d="M3 6L5.500 3.500L8 6M3 11L5.500 13.500L8 11" fill="none" stroke="#555"/></svg>
          <button>Style ${caret}</button><button aria-label="Settings">${gear(17)}</button>
        </div>
      </nav>
      ${this.ribbon()}
      <div class="work">
        ${this.side()}${this.main()}
        <div class="scale">
          <button class="auto">Auto</button>
          <div class="levels">
            <div class="grad" style="top:${levelPct(-113.8)}%;height:${levelPct(-18)}%"></div>
            ${range(-150, -10, 10).map((d) => html`<span class="${d === -120 ? "chip" : d === -130 ? "chip dark" : ""}" style="top:${levelPct(d)}%">${d}</span>`)}
          </div>
        </div>
      </div>
      <footer class="status"><span>RTL Dongle USB - R820T, BW = 1.500 MHz</span><span class="grow"></span>
        <label>CPU: 10.4%</label><div class="bar"><i style="width:2%"></i></div>
        <label>GPU: 8.8%</label><div class="bar"></div>
        <label>Audio: 24ms</label><div class="bar"><i style="width:26%"></i></div>
      </footer>`;
  }
}
